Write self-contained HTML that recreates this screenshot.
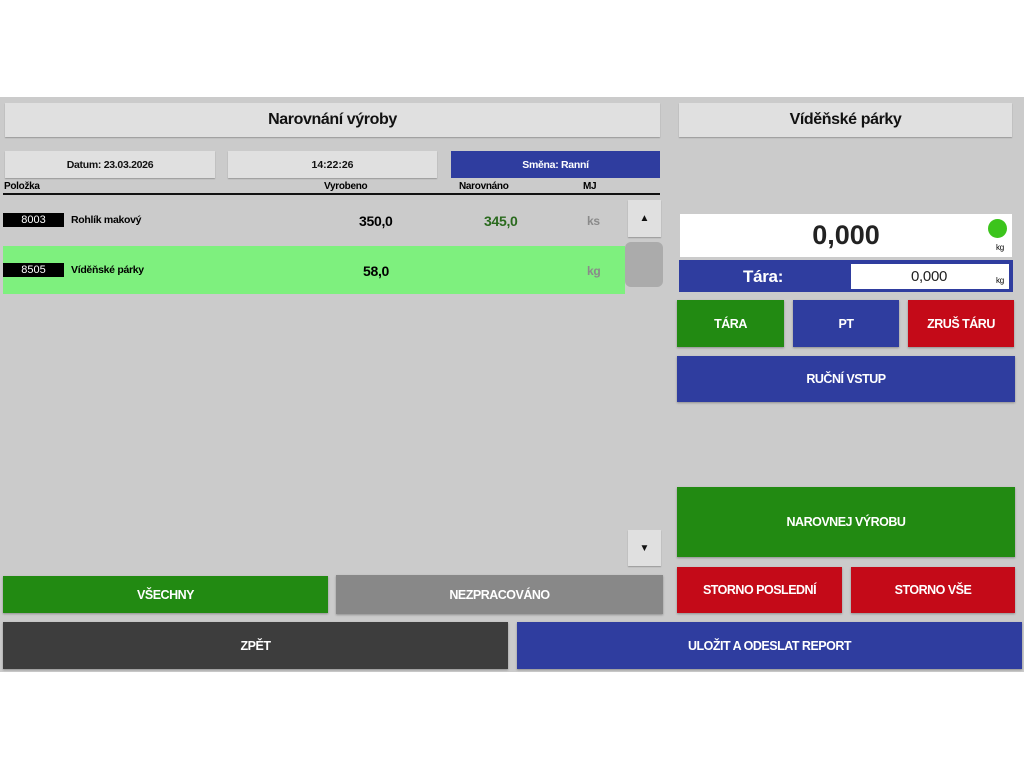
<!DOCTYPE html>
<html><head><meta charset="utf-8"><style>
body{margin:0;width:1024px;height:768px;background:#fff;position:relative;overflow:hidden;font-family:"Liberation Sans",sans-serif;}
.a{position:absolute;box-sizing:border-box;display:flex;align-items:center;justify-content:center;font-weight:bold;}
.lt{background:#e0e0e0;color:#111;box-shadow:0 1px 1px rgba(0,0,0,.25);}
.bl{background:#2f3d9f;color:#fff;}
.gr{background:#228a12;color:#fff;}
.rd{background:#c40a18;color:#fff;}
.btn{font-size:12.5px;letter-spacing:-0.5px;box-shadow:0 1px 2px rgba(0,0,0,.3);}
.t{position:absolute;font-weight:bold;white-space:nowrap;letter-spacing:-0.3px;}
</style></head><body>
<div style="position:absolute;left:0;top:97px;width:1024px;height:575px;background:#cbcbcb"></div>

<div class="a lt" style="left:5px;top:103px;width:655px;height:34px;font-size:16px;letter-spacing:-0.4px">Narovnání výroby</div>
<div class="a lt" style="left:5px;top:151px;width:210px;height:27px;font-size:10.5px;letter-spacing:-0.3px">Datum: 23.03.2026</div>
<div class="a lt" style="left:228px;top:151px;width:209px;height:27px;font-size:10.5px">14:22:26</div>
<div class="a bl" style="left:451px;top:151px;width:209px;height:27px;font-size:10.5px;letter-spacing:-0.3px">Směna: Ranní</div>

<div class="t" style="left:4px;top:181px;font-size:10px">Položka</div>
<div class="t" style="left:324px;top:181px;font-size:10px">Vyrobeno</div>
<div class="t" style="left:459px;top:181px;font-size:10px">Narovnáno</div>
<div class="t" style="left:583px;top:181px;font-size:10px">MJ</div>
<div style="position:absolute;left:3px;top:193px;width:657px;height:2px;background:#111"></div>

<div class="a" style="left:3px;top:213px;width:61px;height:14px;background:#000;color:#fff;font-weight:normal;font-size:11px">8003</div>
<div class="t" style="left:71px;top:214px;font-size:10.5px">Rohlík makový</div>
<div class="t" style="left:359px;top:213px;font-size:14px">350,0</div>
<div class="t" style="left:484px;top:213px;font-size:14px;color:#2a6a1e">345,0</div>
<div class="t" style="left:587px;top:214px;font-size:12px;color:#8a8a8a">ks</div>
<div class="a lt" style="left:628px;top:200px;width:33px;height:37px;font-size:10px">▲</div>

<div style="position:absolute;left:3px;top:246px;width:622px;height:48px;background:#7ef07e"></div>
<div class="a" style="left:3px;top:263px;width:61px;height:14px;background:#000;color:#fff;font-weight:normal;font-size:11px">8505</div>
<div class="t" style="left:71px;top:264px;font-size:10.5px">Víděňské párky</div>
<div class="t" style="left:363px;top:263px;font-size:14px">58,0</div>
<div class="t" style="left:587px;top:264px;font-size:12px;color:#8a8a8a">kg</div>
<div style="position:absolute;left:625px;top:242px;width:38px;height:45px;background:#ababab;border-radius:6px"></div>

<div class="a lt" style="left:628px;top:530px;width:33px;height:36px;font-size:10px">▼</div>

<div class="a btn gr" style="left:3px;top:576px;width:325px;height:37px">VŠECHNY</div>
<div class="a btn" style="left:336px;top:575px;width:327px;height:39px;background:#888;color:#fff">NEZPRACOVÁNO</div>
<div class="a btn" style="left:3px;top:622px;width:505px;height:47px;background:#3d3d3d;color:#fff">ZPĚT</div>
<div class="a btn bl" style="left:517px;top:622px;width:505px;height:47px">ULOŽIT A ODESLAT REPORT</div>

<div class="a lt" style="left:679px;top:103px;width:333px;height:34px;font-size:16px;letter-spacing:-0.4px">Víděňské párky</div>
<div class="a" style="left:680px;top:214px;width:332px;height:43px;background:#fff;font-size:27px;color:#222">0,000</div>
<div style="position:absolute;left:988px;top:219px;width:19px;height:19px;border-radius:50%;background:#3cc41c"></div>
<div class="t" style="left:996px;top:243px;font-size:8px;font-weight:normal">kg</div>
<div class="a bl" style="left:679px;top:260px;width:334px;height:32px"></div>
<div class="t" style="left:743px;top:267px;font-size:17px;color:#fff">Tára:</div>
<div style="position:absolute;left:851px;top:264px;width:158px;height:25px;background:#fff"></div>
<div class="t" style="left:911px;top:268px;font-size:15px;font-weight:normal;color:#222">0,000</div>
<div class="t" style="left:996px;top:276px;font-size:8px;font-weight:normal">kg</div>

<div class="a btn gr" style="left:677px;top:300px;width:107px;height:47px">TÁRA</div>
<div class="a btn bl" style="left:793px;top:300px;width:106px;height:47px">PT</div>
<div class="a btn rd" style="left:908px;top:300px;width:106px;height:47px">ZRUŠ TÁRU</div>
<div class="a btn bl" style="left:677px;top:356px;width:338px;height:46px">RUČNÍ VSTUP</div>
<div class="a btn gr" style="left:677px;top:487px;width:338px;height:70px">NAROVNEJ VÝROBU</div>
<div class="a btn rd" style="left:677px;top:567px;width:165px;height:46px">STORNO POSLEDNÍ</div>
<div class="a btn rd" style="left:851px;top:567px;width:164px;height:46px">STORNO VŠE</div>
</body></html>
